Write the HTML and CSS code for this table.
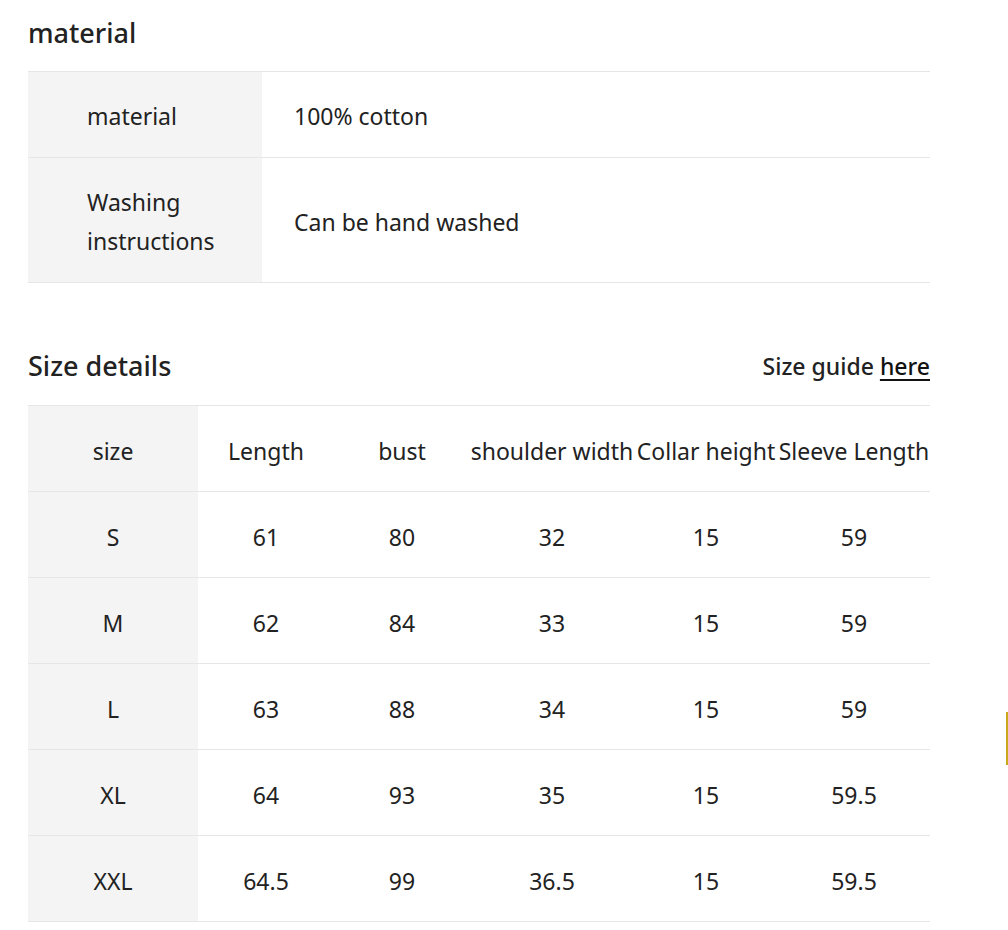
FILE: index.html
```html
<!DOCTYPE html>
<html lang="en">
<head>
<meta charset="utf-8">
<title>Product details</title>
<link rel="stylesheet" href="styles.css">
</head>
<body>
<main class="page">
  <section class="section">
    <h2 class="section-title">material</h2>
    <table class="spec-table">
      <tbody>
        <tr>
          <th class="spec-label">material</th>
          <td class="spec-value">100% cotton</td>
        </tr>
        <tr>
          <th class="spec-label">Washing<br>instructions</th>
          <td class="spec-value">Can be hand washed</td>
        </tr>
      </tbody>
    </table>
  </section>

  <section class="section section-size">
    <div class="section-head">
      <h2 class="section-title">Size details</h2>
      <p class="size-guide">Size guide <a href="#" class="size-guide-link">here</a></p>
    </div>
    <table class="size-table">
      <thead>
        <tr>
          <th class="col-size">size</th>
          <th>Length</th>
          <th>bust</th>
          <th>shoulder width</th>
          <th>Collar height</th>
          <th>Sleeve Length</th>
        </tr>
      </thead>
      <tbody>
        <tr><th class="col-size">S</th><td>61</td><td>80</td><td>32</td><td>15</td><td>59</td></tr>
        <tr><th class="col-size">M</th><td>62</td><td>84</td><td>33</td><td>15</td><td>59</td></tr>
        <tr><th class="col-size">L</th><td>63</td><td>88</td><td>34</td><td>15</td><td>59</td></tr>
        <tr><th class="col-size">XL</th><td>64</td><td>93</td><td>35</td><td>15</td><td>59.5</td></tr>
        <tr><th class="col-size">XXL</th><td>64.5</td><td>99</td><td>36.5</td><td>15</td><td>59.5</td></tr>
      </tbody>
    </table>
  </section>
</main>
<div class="edge-bar"></div>
</body>
</html>
```

FILE: styles.css
```css
* {
  box-sizing: border-box;
}

html, body {
  margin: 0;
  padding: 0;
  background: #ffffff;
}

body {
  font-family: "Noto Sans", "Open Sans", sans-serif;
  color: #222222;
  font-size: 23px;
}

.page {
  width: 930px;
  padding-left: 28px;
}

.section-title {
  margin: 0;
  font-size: 27px;
  font-weight: 500;
  line-height: 34px;
  color: #222222;
}

.section > .section-title {
  padding-top: 16px;
  padding-bottom: 21px;
}

.spec-table,
.size-table {
  width: 100%;
  border-collapse: collapse;
  border-top: 1px solid #e6e6e6;
}

.spec-table tr,
.size-table tr {
  border-bottom: 1px solid #e6e6e6;
}

.spec-label {
  width: 234px;
  background: #f4f4f4;
  text-align: left;
  font-weight: 400;
  padding: 25px 0 21px 59px;
  line-height: 39px;
  vertical-align: middle;
}

.spec-value {
  padding: 25px 0 21px 32px;
  line-height: 39px;
  vertical-align: middle;
}

.section-size {
  padding-top: 66px;
}

.section-head {
  display: flex;
  justify-content: space-between;
  align-items: center;
  padding-bottom: 22px;
}

.size-guide {
  margin: 0;
  font-size: 23px;
  font-weight: 500;
  line-height: 34px;
}

.size-guide-link {
  color: #111111;
  text-decoration: underline;
  text-underline-offset: 4px;
  text-decoration-thickness: 2px;
}

.size-table {
  table-layout: fixed;
}

.size-table th,
.size-table td {
  height: 86px;
  padding: 4px 0 0 0;
  text-align: center;
  vertical-align: middle;
  font-weight: 400;
  white-space: nowrap;
  line-height: 30px;
}

.size-table th:nth-child(1) { width: 170px; }
.size-table th:nth-child(2) { width: 136px; }
.size-table th:nth-child(3) { width: 136px; }
.size-table th:nth-child(4) { width: 164px; }
.size-table th:nth-child(5) { width: 144px; }
.size-table th:nth-child(6) { width: 152px; }

.size-table .col-size {
  background: #f4f4f4;
}

.edge-bar {
  position: fixed;
  left: 1006px;
  top: 712px;
  width: 2px;
  height: 53px;
  background: #c9a81a;
}
```
